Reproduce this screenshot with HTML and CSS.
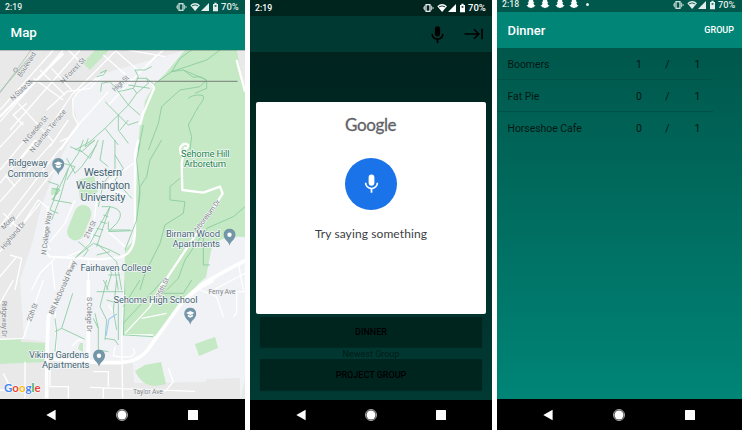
FILE: index.html
```html
<!DOCTYPE html>
<html lang="en">
<head>
<meta charset="utf-8">
<title>Group planner</title>
<link rel="stylesheet" href="styles.css">
</head>
<body>
<svg class="defs" width="0" height="0">
  <symbol id="status" viewBox="0 0 43 10">
    <rect x="3" y="1.7" width="4" height="6.6" fill="none" stroke="currentColor" stroke-width="1.2"/>
    <path d="M1.4 2.7v4.6M8.6 2.7v4.6M0 4v2M10 4v2" stroke="currentColor" stroke-width=".8"/>
    <path d="M14.3 3.2Q19 -1 24 3.2L19.1 9Z" fill="currentColor"/>
    <path d="M16 3.9Q19 1.9 22.2 3.9" fill="none" stroke="var(--status)" stroke-width=".9"/>
    <path d="M25 9L33 1V9Z" fill="currentColor"/>
    <path d="M37 1.9h1.4V.8h2.2v1.1H42V9.3H37Z" fill="currentColor"/>
    <path d="M38.6 3.2h1.8v1.5h-1.8z" fill="var(--status)"/>
  </symbol>
  <symbol id="mic" viewBox="0 0 24 24">
    <path d="M12 14.5a3.3 3.3 0 0 0 3.3-3.3V5a3.3 3.3 0 0 0-6.6 0v6.2a3.3 3.3 0 0 0 3.3 3.3zM17.8 11a5.8 5.8 0 0 1-11.6 0H4.3a7.7 7.7 0 0 0 6.7 7.6V22.6h2v-4a7.7 7.7 0 0 0 6.7-7.6z" fill="currentColor"/>
  </symbol>
  <symbol id="ghost" viewBox="0 0 10 10">
    <path d="M5 .2C3.3.2 2.5 1.4 2.6 3.2L1.5 3.5 2.6 4.5Q2 6.2.4 6.8L2.2 7.7 2.6 8.5 3.8 8.4 5 9.3 6.2 8.4 7.4 8.5 7.8 7.7 9.6 6.8Q8 6.2 7.4 4.5L8.5 3.5 7.4 3.2C7.5 1.4 6.7.2 5 .2Z" fill="currentColor"/>
  </symbol>
  <symbol id="back" viewBox="0 0 12 12"><path d="M10.6.8V11.2L1.3 6Z" fill="#fff"/></symbol>
  <symbol id="home" viewBox="0 0 12 12"><circle cx="6" cy="6" r="5.5" fill="#222" stroke="#bbb" stroke-width=".9"/><circle cx="6" cy="6" r="4.5" fill="#fff"/></symbol>
  <symbol id="recent" viewBox="0 0 12 12"><rect x="1" y="1" width="10" height="10" rx=".5" fill="#fff"/></symbol>
  <symbol id="pin" viewBox="0 0 36 54">
    <path d="M18 52C16 38 0 34 0 18a18 18 0 0 1 36 0C36 34 20 38 18 52Z" fill="#7295a7"/>
  </symbol>
</svg>

<main class="screens">
  <section class="phone phone-map">
    <div class="status"><span>2:19</span><svg class="status-icons"><use href="#status"/></svg><span class="battery">70%</span></div>
    <header class="bar"><h1>Map</h1></header>
    <svg class="map" viewBox="0 50 245 349">
      <rect y="50" width="245" height="349" fill="#e9e9e9"/>
      <path class="campus" d="M186 50L98 75 72 98 78 125 58 162 42 204 33 240 20 280 24 339 48 342 48 358 133 363 134 383 206 382 206 379 240 378 240 399 245 380V50Z"/>
      <path class="park" d="M185 50H237L245 91V237Q215 235 211 251L206 277 199 283 155 336H123L125 250 134 240 138 148 140 126 143 115 145 101 154 85 165 74Z"/>
      <path d="M237 50L245 91V50Z" fill="#e9e9e9"/>
      <path class="park" d="M83 63L95 50H109L90 70ZM0 339L21 339 21 342 45 343V362L0 364ZM80 343H83V352L78 349ZM78 180L94 176 98 192 80 200ZM51 190L58 187 58 194 51 195ZM195 344L215 337 218 348 199 356ZM135 371L145 365 161 362 166 384Q144 391 135 371Z"/>
      <rect class="park" x="71" y="204" width="17" height="37" rx="9" transform="rotate(22 79 222)"/>
      <!-- streets -->
      <g class="street" transform="scale(.33333)">
        <path d="M0 365L190 150M0 330L160 150M30 390L240 150M0 442L70 365M55 310L160 425M155 205L215 270M100 235L190 300M120 210L195 285M70 375L40 345 80 310M110 440L215 285 275 225 350 150M310 165L395 240M350 155L420 215M205 150L245 190M325 275L235 375 220 345 218 300 230 280 290 235M470 165L325 315M310 220L270 265 200 275 140 330M385 150L495 170M490 150L420 215M150 440L205 360M180 425L210 410"/>
        <path class="wide" d="M190 160L0 350M235 375L180 450"/>
        <path class="wide" d="M420 375L430 340 462 265 455 245M710 180L735 275"/>
      </g>
      <g class="street" transform="translate(0 140) scale(.33333)">
        <path d="M0 90L75 0M0 130L105 0M0 185L155 10M0 260L180 25M30 260L185 60M0 335L120 190M30 310L115 180 145 205M110 0L60 60M20 110L45 140M10 220L60 270M145 200L130 290 150 330M150 305L195 250 225 180M290 180L275 300 250 330 200 350M265 355V450M95 450L120 400 165 355M30 345L65 355 45 450M0 410L50 350M155 360L165 450M215 360L185 450M320 270L375 320M390 165L330 150M295 150L400 70M640 450L735 400M715 370L730 450"/>
        <path class="wide" d="M415 0L405 40V270Q405 340 360 352L300 358 150 350 130 330M555 20L545 70 547 150 610 158 660 140 668 160 640 205 490 430 485 450"/>
        <path class="wide" d="M543 45L540 25Q548 8 560 12T553 32"/>
      </g>
      <g class="street" transform="translate(0 280) scale(.33333)">
        <path d="M40 0L0 70M130 0L95 100 70 175 0 178M165 60L168 220 185 240M375 0L365 180 368 355M325 75L350 110M375 165L460 165M375 160L450 80 490 0M425 115L500 100M215 200L235 180 255 178M400 205Q420 240 340 228L345 200M75 245V355M150 250V320H205V355M280 275H325V320M270 322L585 334M310 325V355M10 280L30 320M0 330H60M505 265L520 305 495 335M600 30L650 50 670 110M735 35H710V100L700 110"/>
        <path class="major" d="M200 0L145 110 140 235 300 248H360Q420 245 450 200L540 75Q570 35 640 0M265 0V240M140 235V355"/>
        <path class="major" d="M570 45Q600 10 735 -58"/>
      </g>
      <!-- trails -->
      <g class="trail" transform="scale(.33333)">
        <path d="M0 275L90 170M660 150L620 180 515 215 465 250M575 150L540 175 515 215M515 215L550 210 620 240 600 260 540 270 485 320 475 370 445 450M550 210L580 232Q610 225 620 245V265L585 280M565 295Q575 285 600 285T595 320L565 375 575 410 570 450M430 375L415 450M405 210L415 230 400 265 355 275M400 265L410 280 385 315 420 345M385 315L315 385 270 425 225 450M315 385L355 435M315 305L385 375 415 365M355 275L385 315M355 345V390L385 430M360 390L385 360M405 210H435L455 200M410 235L440 235 445 250 410 280M440 235L465 255M300 220L320 210 310 225 290 230M355 275L330 245 305 250 302 275M265 415L255 440 285 420M385 255L450 265"/>
      </g>
      <g class="trail" transform="translate(0 140) scale(.33333)">
        <path d="M250 0L235 40 205 85 180 175 155 240M210 20L245 35 285 0M200 55L225 100 245 80 290 15M240 30L270 55 295 0M205 85L165 170 150 210 175 220M145 125L175 135 160 180M160 180L215 190M190 70L225 80 200 120M155 145L180 150 155 180M345 0V85L310 130 295 200M345 45L370 85 345 120 395 175M325 80L300 60 310 0M305 200H330L270 310 225 355M330 200L290 320M310 225L325 230M300 245L320 250M290 265L310 270M280 285L300 290M330 200Q380 210 350 250L325 275 395 272M235 305L265 330 250 350M230 350L280 310 330 330 360 345M290 310L350 365 365 450M325 245V270H390M330 335L290 345M420 10L410 60 420 160 410 240 375 330M485 0L450 60 440 110 420 140 415 200M540 115L510 140 510 180 555 185 550 220 495 255 480 310 435 400 420 450M735 200L700 230 620 265 610 290 610 375M610 280L555 360 535 415 500 450M320 375L335 400 320 450M345 390L355 450M325 405H360M610 375H630"/>
      </g>
      <g class="trail" transform="translate(0 280) scale(.33333)">
        <path d="M218 40L185 145 255 178M165 115L170 155 165 215M165 155L185 145M285 100L295 145V210L325 215M320 0L300 80 320 120 315 180M350 0L340 90 350 150M320 60L355 70 355 180M290 35H370M315 175L345 180 355 195M295 145L280 115M310 0L325 30M375 0L370 165M370 80L420 0M370 130L490 0M375 165L460 170M505 0L490 40 550 40 575 0"/>
      </g>
      <path d="M117 314L109 319 106 336" fill="none" stroke="#9ccdf2" stroke-width="1.2"/>
      <path d="M0 93L31 50M18 72L31 57" fill="none" stroke="#aaa" stroke-width=".6"/>
      <circle cx="15.5" cy="70" r="2" fill="#ddd" stroke="#999" stroke-width=".7"/>
      <!-- street names -->
      <g class="road-name">
        <text transform="translate(21 77.500) rotate(-57)" textLength="28">Boulevard</text>
        <text transform="translate(13 101) rotate(-43)" textLength="27">N State St</text>
        <text transform="translate(63 84) rotate(-46)" textLength="33">N Forest St</text>
        <text transform="translate(115 92) rotate(-44)" textLength="20">High St</text>
        <text transform="translate(26 144) rotate(-49)" textLength="34">N Garden St</text>
        <text transform="translate(33 153) rotate(-51)" textLength="53">N Garden Terrace</text>
        <text transform="translate(4 230) rotate(-47)" textLength="17">Morey</text>
        <text transform="translate(4 250) rotate(-50)" textLength="34">Highland Dr</text>
        <text transform="translate(46 255) rotate(-83)" textLength="43">N College Way</text>
        <text transform="translate(88 239) rotate(-64)" textLength="19">21st St</text>
        <text transform="translate(197 233) rotate(-53)" textLength="39">Arboretum Dr</text>
        <text transform="translate(160 298) rotate(-64)" textLength="21">25th St</text>
        <text transform="translate(53 315) rotate(-66)" textLength="58">Bill McDonald Pkwy</text>
        <text transform="translate(31 322) rotate(-69)" textLength="19">20th St</text>
        <text transform="translate(87 297) rotate(90)" textLength="35">S College Dr</text>
        <text transform="translate(2 301) rotate(90)" textLength="36">Ridgeway Dr</text>
        <text x="208.500" y="294" textLength="27">Ferry Ave</text>
        <text x="133" y="394" textLength="30">Taylor Ave</text>
      </g>
      <path d="M28 81.300H237.500" stroke="#777d79" stroke-width="1"/>
      <!-- places -->
      <g class="place">
        <text x="8.500" y="166.200" textLength="39">Ridgeway</text>
        <text x="7.500" y="176.500" textLength="41">Commons</text>
        <text x="166" y="236.500" textLength="54">Birnam Wood</text>
        <text x="172.500" y="247" textLength="47.500">Apartments</text>
        <text x="80.500" y="271.300" textLength="71">Fairhaven College</text>
        <text x="113.500" y="303.200" textLength="84">Sehome High School</text>
        <text x="29" y="357.500" textLength="60">Viking Gardens</text>
        <text x="42" y="368" textLength="47.500">Apartments</text>
        <g class="large">
          <text x="84" y="176.300" textLength="38">Western</text>
          <text x="76" y="188.800" textLength="54">Washington</text>
          <text x="80.500" y="201" textLength="45">University</text>
        </g>
        <g class="nature">
          <text x="181" y="156.800" textLength="48.500">Sehome Hill</text>
          <text x="184" y="167" textLength="42">Arboretum</text>
        </g>
      </g>
      <use href="#pin" x="52" y="158" width="12.500" height="18"/>
      <use href="#pin" x="223.300" y="228.500" width="12.500" height="18"/>
      <use href="#pin" x="184" y="307.500" width="12.500" height="18"/>
      <use href="#pin" x="92.800" y="349.500" width="12.500" height="18"/>
      <g fill="#fff">
        <circle cx="229.500" cy="234.700" r="2.200"/><circle cx="99" cy="355.700" r="2.200"/>
        <path id="cap" d="M54 163.500L58.300 161.500 62.500 163.500 58.300 165.500ZM55.800 165L58.300 166.200 60.900 165V167L58.300 168.200 55.800 167Z"/>
        <use href="#cap" x="132" y="149.500"/>
      </g>
      <text class="logo" x="4" y="392"><tspan fill="#4285f4">G</tspan><tspan fill="#ea4335">o</tspan><tspan fill="#fbbc05">o</tspan><tspan fill="#4285f4">g</tspan><tspan fill="#34a853">l</tspan><tspan fill="#ea4335">e</tspan></text>
      <rect y="50" width="245" height="1" fill="#000" opacity=".2"/>
    </svg>
    <nav class="nav"><svg><use href="#back"/></svg><svg><use href="#home"/></svg><svg><use href="#recent"/></svg></nav>
  </section>

  <section class="phone phone-voice">
    <div class="status"><span>2:19</span><svg class="status-icons"><use href="#status"/></svg><span class="battery">70%</span></div>
    <header class="bar">
      <svg class="bar-mic"><use href="#mic"/></svg>
      <svg class="bar-tab" viewBox="0 0 20 12"><path d="M.5 6H15M10 1.300L14.800 6 10 10.700M18 .8V11.200" fill="none" stroke="#000" stroke-width="1.600"/></svg>
    </header>
    <div class="content">
      <div class="dialog">
        <svg class="wordmark" viewBox="0 0 54 24"><text x="1" y="18" textLength="51.500">Google</text></svg>
        <div class="mic-button"><svg><use href="#mic"/></svg></div>
        <p>Try saying something</p>
      </div>
      <div class="group">DINNER</div>
      <div class="caption">Newest Group</div>
      <div class="group">PROJECT GROUP</div>
    </div>
    <nav class="nav"><svg><use href="#back"/></svg><svg><use href="#home"/></svg><svg><use href="#recent"/></svg></nav>
  </section>

  <section class="phone phone-dinner">
    <div class="status"><span>2:18</span><div class="ghosts"><svg><use href="#ghost"/></svg><svg><use href="#ghost"/></svg><svg><use href="#ghost"/></svg><svg><use href="#ghost"/></svg><i></i></div><svg class="status-icons"><use href="#status"/></svg><span class="battery">70%</span></div>
    <header class="bar"><h1>Dinner</h1><b>GROUP</b></header>
    <div class="content">
      <div class="row"><span>Boomers</span><span>1</span><span>/</span><span>1</span></div>
      <div class="row"><span>Fat Pie</span><span>0</span><span>/</span><span>1</span></div>
      <div class="row"><span>Horseshoe Cafe</span><span>0</span><span>/</span><span>1</span></div>
    </div>
    <nav class="nav"><svg><use href="#back"/></svg><svg><use href="#home"/></svg><svg><use href="#recent"/></svg></nav>
  </section>
</main>
</body>
</html>
```

FILE: styles.css
```css
* { box-sizing: border-box; }
body { margin: 0; background: #fff; font-family: Roboto, sans-serif; overflow: hidden; }
h1, p { margin: 0; }
svg { display: block; flex: none; }
.defs { position: absolute; }
.screens { display: flex; gap: 5px; height: 430px; }
.phone { --status: #00574b; display: flex; flex-direction: column; width: 245px; height: 430px; }
.phone-voice { --status: #00251f; width: 242px; }

.status { display: flex; align-items: center; height: 14px; padding: 0 5px; background: var(--status); color: #e3eeec; font-size: 8.700px; font-weight: 500; line-height: 10px; flex: none; }
.status-icons { width: 43px; height: 10px; margin-left: auto; margin-right: 2px; }
.battery { width: 19px; font-size: 9.500px; white-space: nowrap; }
.phone-voice .status { height: 16px; color: #fff; }
.phone-dinner .status { height: 12px; padding-bottom: 3px; line-height: 9px; }
.phone-dinner .battery { font-size: 9.200px; }
.ghosts { display: flex; align-items: center; gap: 4.300px; margin-left: 7px; color: #fff; }
.ghosts svg { width: 10px; height: 10px; margin-top: -1px; }
.ghosts i { width: 3px; height: 3px; margin-left: 3px; border-radius: 50%; background: #e3eeec; }

.bar { display: flex; align-items: center; height: 36px; padding: 0 8px 0 10.500px; background: #008577; color: #fff; flex: none; }
.bar h1 { padding-top: 1px; font-size: 13.300px; font-weight: 500; line-height: 16px; }
.phone-dinner h1 { font-size: 13px; }
.bar b { margin-left: auto; font-size: 9px; font-weight: 500; }
.phone-voice .bar { justify-content: flex-end; background: #003832; color: #000; padding: 0 8px; }
.bar-mic { width: 19px; height: 19px; margin-right: 17px; }
.bar-tab { width: 20px; height: 12px; }

.map { width: 245px; height: 349px; }
.campus { fill: #f0f2f5; }
.park { fill: #c5e8c5; }
.street path { fill: none; stroke: #fff; stroke-width: 4; stroke-linejoin: round; }
.street .wide { stroke-width: 7; }
.street .major { stroke-width: 11; }
.trail path { fill: none; stroke: #87ca9e; stroke-width: 2.500; stroke-linejoin: round; }
.road-name text { font-size: 7px; fill: #80868b; stroke: #f3f4f5; stroke-width: 1; paint-order: stroke; }
.place text { font-size: 9.500px; fill: #466675; stroke: #f5f7f8; stroke-width: 1.500; paint-order: stroke; }
.place .large text { font-size: 11px; }
.place .nature text { fill: #168346; }
.map .logo { font: 700 11.500px Lato, sans-serif; stroke: #fff; stroke-width: 1; paint-order: stroke; }

.phone-voice .content { display: flex; flex-direction: column; height: 348px; padding: 49.500px 10px 10px; background: linear-gradient(#00231e, #003a33); }
.dialog { display: flex; flex-direction: column; align-items: center; width: 230px; height: 212.500px; margin: 0 -4px 3px; border-radius: 2px; background: #fff; flex: none; }
.wordmark { width: 54px; height: 24px; margin-top: 11px; }
.wordmark text { font: 17px Lato, sans-serif; fill: #5f6368; stroke: #5f6368; stroke-width: .3; }
.mic-button { display: flex; align-items: center; justify-content: center; width: 52px; height: 52px; margin-top: 21px; border-radius: 50%; background: #1a73e8; color: #fff; }
.mic-button svg { width: 21px; height: 21px; }
.dialog p { margin-top: 15.500px; color: #3c4043; font: 12px/17px Lato, sans-serif; letter-spacing: .1px; }
.group { display: flex; align-items: center; justify-content: center; height: 30px; background: #00251f; color: #000; font-size: 9px; font-weight: 500; flex: none; box-shadow: 0 1px 1px #002b25; }
.group:last-child { height: 31px; }
.caption { height: 12px; color: #001b17; font-size: 9px; line-height: 14px; text-align: center; flex: none; }

.phone-dinner .content { height: 351px; background: linear-gradient(#00574b, #008577); }
.row { display: grid; grid-template-columns: 122px 19px 38px 22px; align-items: center; width: 216px; height: 32px; padding: 1px 0 0 10.500px; border-bottom: 1px solid #005246; color: #001713; font-size: 10.400px; text-align: center; }
.row span:first-child { text-align: left; }
.row:last-child { border-color: transparent; }

.nav { display: flex; align-items: center; justify-content: space-between; height: 31px; padding: 0 46px 0 45px; background: #000; flex: none; }
.nav svg { width: 12px; height: 12px; }
.phone-voice .nav { height: 30px; padding: 0 45px; }
```
